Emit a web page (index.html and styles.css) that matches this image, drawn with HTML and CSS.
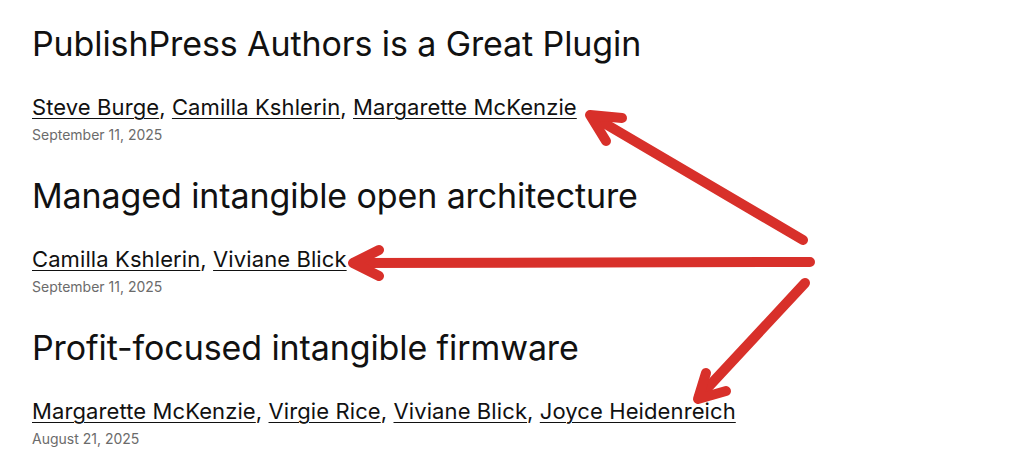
FILE: index.html
```html
<!DOCTYPE html>
<html lang="en">
<head>
<meta charset="utf-8">
<title>Posts</title>
<link rel="stylesheet" href="styles.css">
</head>
<body>
<main class="posts">
  <article class="post">
    <h2 class="post-title">PublishPress Authors is a Great Plugin</h2>
    <p class="post-authors"><a href="#">Steve Burge</a>, <a href="#">Camilla Kshlerin</a>, <a href="#">Margarette McKenzie</a></p>
    <p class="post-date">September 11, 2025</p>
  </article>
  <article class="post">
    <h2 class="post-title">Managed intangible open architecture</h2>
    <p class="post-authors"><a href="#">Camilla Kshlerin</a>, <a href="#">Viviane Blick</a></p>
    <p class="post-date">September 11, 2025</p>
  </article>
  <article class="post">
    <h2 class="post-title">Profit-focused intangible firmware</h2>
    <p class="post-authors"><a href="#">Margarette McKenzie</a>, <a href="#">Virgie Rice</a>, <a href="#">Viviane Blick</a>, <a href="#">Joyce Heidenreich</a></p>
    <p class="post-date">August 21, 2025</p>
  </article>
</main>
<svg class="arrows" width="1024" height="470" viewBox="0 0 1024 470" aria-hidden="true">
  <g fill="none" stroke="#d8302a" stroke-width="10" stroke-linecap="round" stroke-linejoin="round">
    <path d="M803 240 L592 116"/>
    <path d="M622 118 L590 115 L606 141"/>
    <path d="M810 262 L354 263"/>
    <path d="M379 250 L353 263 L379 276"/>
    <path d="M805 283 L699 397"/>
    <path d="M706 373 L698 399 L726 391"/>
  </g>
</svg>
</body>
</html>
```
FILE: styles.css
```css
html, body {
  margin: 0;
  padding: 0;
  background: #ffffff;
}
body {
  width: 1024px;
  height: 470px;
  overflow: hidden;
  position: relative;
  font-family: Inter, "Noto Sans", sans-serif;
  color: #111111;
}
.posts {
  display: flex;
  flex-direction: column;
  gap: 30px;
  padding: 23px 0 0 32px;
}
.post {
  display: flex;
  flex-direction: column;
}
.post-title {
  margin: 0;
  font-size: 34px;
  line-height: 42px;
  font-weight: 400;
  letter-spacing: -0.1px;
}
.post-authors {
  margin: 28px 0 0;
  font-size: 22px;
  line-height: 28px;
  letter-spacing: 0.1px;
}
.post-authors a {
  color: #111111;
  text-decoration: underline;
  text-decoration-thickness: 1px;
  text-underline-offset: 3px;
}
.post-date {
  margin: 4px 0 0;
  font-size: 14px;
  line-height: 20px;
  color: #6b6b6b;
  letter-spacing: 0;
}
.arrows {
  position: absolute;
  left: 0;
  top: 0;
  pointer-events: none;
}
```
